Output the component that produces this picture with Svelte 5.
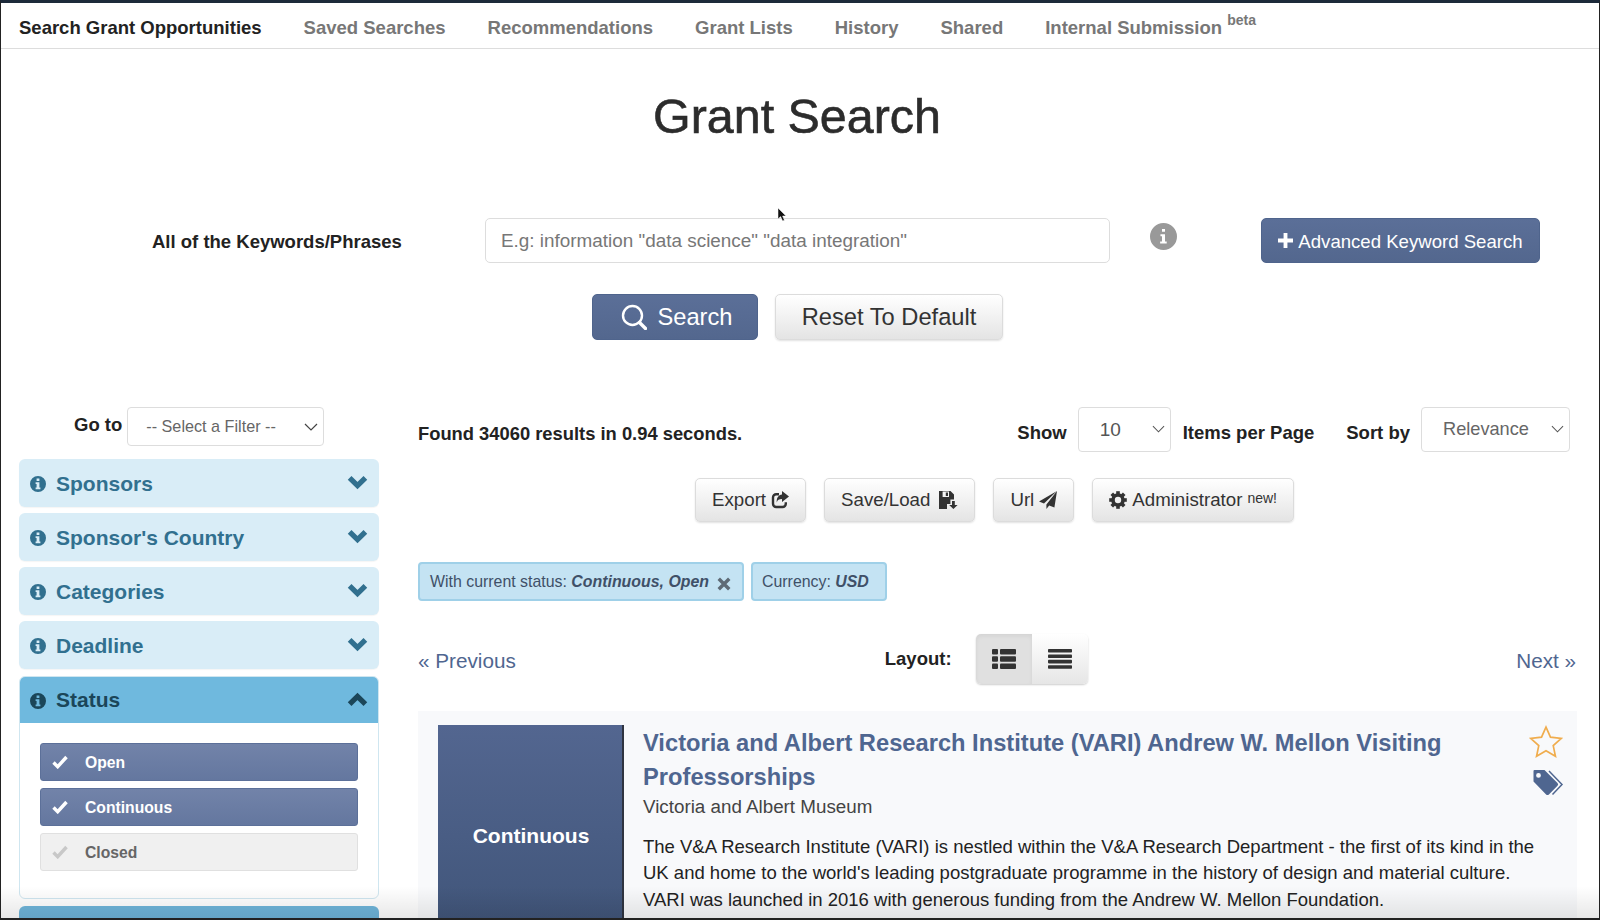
<script>
  const navItems = ['Saved Searches', 'Recommendations', 'Grant Lists', 'History', 'Shared'];
  const collapsed = ["Sponsors", "Sponsor's Country", 'Categories', 'Deadline'];
  const statuses = [
    { label: 'Open', on: true },
    { label: 'Continuous', on: true },
    { label: 'Closed', on: false }
  ];
  const infoPath = 'M8 0a8 8 0 1 0 0 16A8 8 0 0 0 8 0zM6.6 2.6h2.8v2.4H6.6zM5.6 6.2h3.8v5.2h1v1.8H5.6v-1.8h1V8H5.6z';
  const smallInfoPath = 'M8 0a8 8 0 1 0 0 16A8 8 0 0 0 8 0zM7.1 3.6h1.8v1.6H7.1zM6.2 6.6h2.7v4.3h1v1.3H6v-1.3h1.1V7.9h-.9z';
  const teeth = [0, 45, 90, 135, 180, 225, 270, 315];
</script>

<div class="page">
  <nav class="nav">
    <span class="nav-item active">Search Grant Opportunities</span>
    {#each navItems as item}
      <span class="nav-item">{item}</span>
    {/each}
    <span class="nav-item">Internal Submission <sup>beta</sup></span>
  </nav>

  <h1>Grant Search</h1>

  <div class="keyword-row">
    <span class="keyword-label">All of the Keywords/Phrases</span>
    <div class="keyword-input">E.g: information "data science" "data integration"</div>
    <span class="round-info">
      <svg viewBox="0 0 16 16" width="27" height="27"><path fill="#999" fill-rule="evenodd" d={smallInfoPath} /></svg>
    </span>
    <button class="btn primary advanced">
      <svg viewBox="0 0 14 14" width="15" height="15"><path d="M5.2 0h3.6v5.2H14v3.6H8.8V14H5.2V8.8H0V5.2h5.2z" fill="#fff" /></svg>
      <span>Advanced Keyword Search</span>
    </button>
  </div>

  <div class="search-row">
    <button class="btn primary search">
      <svg viewBox="0 0 26 26" width="26" height="26" fill="none" stroke="#fff">
        <circle cx="11.5" cy="11.5" r="9.5" stroke-width="2.4" />
        <path d="M18.5 18.5l6 6" stroke-width="3.4" stroke-linecap="round" />
      </svg>
      Search
    </button>
    <button class="btn default reset">Reset To Default</button>
  </div>

  <div class="main">
    <aside class="sidebar">
      <div class="goto">
        <span class="bold-label">Go to</span>
        <div class="select filter">
          <span>-- Select a Filter --</span>
          <svg viewBox="0 0 14 8" width="14" height="8"><path d="M1 1l6 6 6-6" fill="none" stroke="#444" stroke-width="1.2" /></svg>
        </div>
      </div>

      <div class="panels">
        {#each collapsed as name}
          <div class="panel-head">
            <svg class="info" viewBox="0 0 16 16" width="16" height="16"><path fill="#31708f" fill-rule="evenodd" d={infoPath} /></svg>
            <span>{name}</span>
            <svg class="chev" viewBox="0 0 20 14" width="21" height="15"><path d="M2.5 2.5L10 10l7.5-7.5" fill="none" stroke="#31708f" stroke-width="5" /></svg>
          </div>
        {/each}

        <div class="status-panel">
          <div class="panel-head open">
            <svg class="info" viewBox="0 0 16 16" width="16" height="16"><path fill="#1b4659" fill-rule="evenodd" d={infoPath} /></svg>
            <span>Status</span>
            <svg class="chev" viewBox="0 0 20 14" width="21" height="15"><path d="M2.5 11.5L10 4l7.5 7.5" fill="none" stroke="#1b4659" stroke-width="5" /></svg>
          </div>
          <div class="status-body">
            {#each statuses as s}
              <div class="status-item" class:on={s.on}>
                <svg viewBox="0 0 16 14" width="16" height="14"><path d="M1.5 7.5l4.2 4.2L14.5 2" fill="none" stroke={s.on ? '#fff' : '#c8c8c8'} stroke-width="3.4" /></svg>
                <span>{s.label}</span>
              </div>
            {/each}
          </div>
        </div>
        <div class="panel-head next-panel"></div>
      </div>
    </aside>

    <section class="results">
      <div class="top-row">
        <span class="bold-label found">Found 34060 results in 0.94 seconds.</span>
        <div class="top-controls">
          <span class="bold-label">Show</span>
          <div class="select show">
            <span>10</span>
            <svg viewBox="0 0 14 8" width="13" height="8"><path d="M1 1l6 6 6-6" fill="none" stroke="#555" stroke-width="1.1" /></svg>
          </div>
          <span class="bold-label">Items per Page</span>
          <span class="bold-label sort">Sort by</span>
          <div class="select relevance">
            <span>Relevance</span>
            <svg viewBox="0 0 14 8" width="13" height="8"><path d="M1 1l6 6 6-6" fill="none" stroke="#555" stroke-width="1.1" /></svg>
          </div>
        </div>
      </div>

      <div class="actions">
        <button class="btn default act">
          Export
          <svg viewBox="0 0 18 18" width="18" height="18"><path d="M8 3.2H5.2A3.2 3.2 0 0 0 2 6.4v6.4A3.2 3.2 0 0 0 5.2 16h6.4a3.2 3.2 0 0 0 3.2-3.2v-1.6" fill="none" stroke="#333" stroke-width="2.4" /><path d="M11 0l7 5.6L11 11V8C8 8 6.4 9 5.8 11.4 5.2 7 7.6 3.6 11 3.4z" fill="#333" /></svg>
        </button>
        <button class="btn default act saveload">
          Save/Load
          <svg viewBox="0 0 19 18" width="19" height="18"><path fill-rule="evenodd" fill="#333" d="M0 0h11.5L15 3.4v5.1h-3.6V13H8v5H0zM3.6 0.6v5.4h6.4V0.6zM6.8 1.6h2.2v3.4H6.8z" /><path d="M13 10h2.8v4H18.6l-4.2 4-4.2-4H13z" fill="#333" /></svg>
        </button>
        <button class="btn default act url">
          Url
          <svg viewBox="0 0 18 18" width="18" height="18"><path d="M18 0L0 10.6l5 2z" fill="#333" /><path d="M18 0L7.4 13.6V18l2.8-3.4 5.2 2z" fill="#333" /></svg>
        </button>
        <button class="btn default act admin">
          <svg viewBox="0 0 18 18" width="18" height="18">
            <circle cx="9" cy="9" r="5" fill="none" stroke="#333" stroke-width="3.6" />
            {#each teeth as a}
              <rect x="7.2" y="0.2" width="3.6" height="4" fill="#333" transform="rotate({a} 9 9)" />
            {/each}
          </svg>
          <span>Administrator</span> <sup>new!</sup>
        </button>
      </div>

      <div class="chips">
        <div class="chip">
          With current status:&nbsp;<b>Continuous, Open</b>
          <svg viewBox="0 0 12 12" width="14" height="14"><path d="M1.5 1.5l9 9M10.5 1.5l-9 9" stroke="#5f6b76" stroke-width="3" /></svg>
        </div>
        <div class="chip usd">Currency:&nbsp;<b>USD</b></div>
      </div>

      <div class="pager">
        <span class="page-link">« Previous</span>
        <div class="layout-group">
          <span class="bold-label">Layout:</span>
          <div class="toggle">
            <span class="toggle-btn pressed">
              <svg viewBox="0 0 24 20" width="24" height="20" fill="#333">
                <rect x="0" y="0" width="6" height="5.4" rx="1" /><rect x="8" y="0" width="16" height="5.4" rx="1" />
                <rect x="0" y="7.3" width="6" height="5.4" rx="1" /><rect x="8" y="7.3" width="16" height="5.4" rx="1" />
                <rect x="0" y="14.6" width="6" height="5.4" rx="1" /><rect x="8" y="14.6" width="16" height="5.4" rx="1" />
              </svg>
            </span>
            <span class="toggle-btn">
              <svg viewBox="0 0 24 20" width="24" height="20" fill="#333">
                <rect y="0" width="24" height="3.6" rx=".8" /><rect y="5.4" width="24" height="3.6" rx=".8" />
                <rect y="10.8" width="24" height="3.6" rx=".8" /><rect y="16.2" width="24" height="3.6" rx=".8" />
              </svg>
            </span>
          </div>
        </div>
        <span class="page-link next">Next »</span>
      </div>

      <article class="card">
        <div class="status-box">Continuous</div>
        <div class="card-body">
          <h2>Victoria and Albert Research Institute (VARI) Andrew W. Mellon Visiting Professorships</h2>
          <div class="sponsor">Victoria and Albert Museum</div>
          <p>The V&amp;A Research Institute (VARI) is nestled within the V&amp;A Research Department - the first of its kind in the UK and home to the world's leading postgraduate programme in the history of design and material culture. VARI was launched in 2016 with generous funding from the Andrew W. Mellon Foundation.</p>
        </div>
        <div class="card-icons">
          <svg viewBox="0 0 32 31" width="34" height="33"><path d="M16 2l4.2 9.4 10.2 1.1-7.6 6.9 2.1 10-8.9-5.1-8.9 5.1 2.1-10-7.6-6.9 10.2-1.1z" fill="none" stroke="#f0ad4e" stroke-width="1.6" /></svg>
          <svg class="tag" viewBox="0 0 30 26" width="31" height="26"><path fill="#4f6690" fill-rule="evenodd" d="M1 0h10l13 13a2 2 0 0 1 0 2.8L15.4 24.4a2 2 0 0 1-2.8 0L0 11.5V1a1 1 0 0 1 1-1zM5 3a2.4 2.4 0 1 0 0 4.8A2.4 2.4 0 0 0 5 3z" /><path d="M15.5 1l13 13.6-9.5 10" fill="none" stroke="#4f6690" stroke-width="1.5" /></svg>
        </div>
      </article>
    </section>
  </div>

  <svg class="cursor" viewBox="0 0 9 15" width="9" height="15"><path d="M0 0v11l2.6-2.4L4.6 13l1.8-.8L4.6 8H8z" fill="#111" stroke="#fff" stroke-width=".5" /></svg>
  <div class="bottom-fade"></div>
</div>

<style>
  :global(body) {
    margin: 0;
    background: #fff;
  }
  .page {
    position: relative;
    box-sizing: border-box;
    width: 1600px;
    height: 920px;
    overflow: hidden;
    border-top: 3px solid #1c2a3a;
    border-left: 1px solid #222;
    border-right: 1px solid #222;
    border-bottom: 2px solid #222;
    font-family: "Liberation Sans", Arial, sans-serif;
    color: #222;
    font-size: 18px;
  }
  .nav {
    display: flex;
    align-items: center;
    gap: 42px;
    height: 45px;
    padding-left: 18px;
    border-bottom: 1px solid #ddd;
  }
  .nav-item {
    font-weight: 700;
    font-size: 18.5px;
    color: #777;
    white-space: nowrap;
    margin-top: 4px;
  }
  .nav-item.active {
    color: #222;
  }
  .nav-item sup {
    font-size: 14px;
    line-height: 0;
    position: relative;
    top: -1px;
  }
  h1 {
    margin: 40px 0 0;
    font-size: 48.4px;
    line-height: 54px;
    font-weight: 400;
    -webkit-text-stroke: 0.6px #2c2c2c;
    text-align: center;
    color: #2c2c2c;
    padding-right: 6px;
  }
  .keyword-row {
    display: flex;
    align-items: center;
    height: 45px;
    margin-top: 75px;
    padding-left: 151px;
  }
  .keyword-label {
    width: 333px;
    font-weight: 700;
    font-size: 18.5px;
    margin-top: 2px;
  }
  .keyword-input {
    box-sizing: border-box;
    width: 625px;
    height: 45px;
    display: flex;
    align-items: center;
    padding: 1px 0 0 15px;
    border: 1px solid #ddd;
    border-radius: 5px;
    color: #777;
    font-size: 18.9px;
  }
  .round-info {
    display: flex;
    margin-left: 40px;
    margin-bottom: 9px;
  }
  .btn {
    box-sizing: border-box;
    font-family: inherit;
    display: inline-flex;
    align-items: center;
    justify-content: center;
    border-radius: 5px;
    cursor: pointer;
    white-space: nowrap;
  }
  .primary {
    color: #fff;
    border: 1px solid #4f648c;
    background: linear-gradient(#5b6f98, #53678e);
  }
  .default {
    color: #333;
    border: 1px solid #dcdcdc;
    background: linear-gradient(#fff, #e4e4e4);
    box-shadow: 0 1px 2px rgba(0, 0, 0, 0.12);
  }
  .advanced {
    width: 279px;
    height: 45px;
    gap: 5px;
    font-size: 18.6px;
    margin-left: 84px;
  }
  .advanced span {
    margin-top: 2px;
  }
  .search-row {
    display: flex;
    justify-content: center;
    gap: 17px;
    margin-top: 31px;
    padding-right: 5px;
  }
  .search {
    width: 166px;
    height: 46px;
    gap: 10px;
    padding-left: 10px;
    font-size: 23.7px;
  }
  .reset {
    width: 228px;
    height: 46px;
    font-size: 23.7px;
  }
  .main {
    display: flex;
    align-items: flex-start;
    margin-top: 66px;
    padding-left: 18px;
  }
  .sidebar {
    width: 360px;
    flex: none;
  }
  .goto {
    display: flex;
    align-items: center;
    gap: 5px;
    margin-top: 1px;
    padding-left: 55px;
  }
  .goto .bold-label {
    margin-top: -3px;
  }
  .bold-label {
    font-weight: 700;
    font-size: 18.5px;
    color: #222;
    white-space: nowrap;
  }
  .select {
    box-sizing: border-box;
    display: flex;
    align-items: center;
    justify-content: space-between;
    background: #fff;
    border: 1px solid #ddd;
    border-radius: 4px;
    color: #666;
  }
  .filter {
    width: 197px;
    height: 39px;
    padding: 0 5px 0 18px;
    font-size: 16.2px;
  }
  .panels {
    display: flex;
    flex-direction: column;
    gap: 6px;
    margin-top: 13px;
  }
  .panel-head {
    box-sizing: border-box;
    display: flex;
    align-items: center;
    height: 48px;
    padding: 0 11px 0 11px;
    border-radius: 6px;
    background: #d9edf7;
    color: #31708f;
    font-size: 21px;
    font-weight: 700;
    box-shadow: 0 1px 1px rgba(0, 0, 0, 0.04);
  }
  .panel-head span {
    margin-top: 1px;
  }
  .panel-head .info {
    margin-right: 10px;
    flex: none;
    margin-top: 2px;
  }
  .panel-head .chev {
    margin-left: auto;
    margin-bottom: 1px;
  }
  .status-panel {
    box-sizing: border-box;
    height: 223px;
    border: 1px solid #cfe6f0;
    border-radius: 6px;
    overflow: hidden;
    margin-top: 1px;
  }
  .panel-head.open {
    margin: -1px -1px 0;
    height: 47px;
    border-radius: 0;
    background: #6fb9de;
    color: #1b4659;
    box-shadow: none;
  }
  .status-body {
    display: flex;
    flex-direction: column;
    gap: 7px;
    padding: 20px 20px 0;
  }
  .status-item {
    box-sizing: border-box;
    display: flex;
    align-items: center;
    height: 38px;
    padding-left: 11px;
    border: 1px solid #e0e0e0;
    border-radius: 3px;
    background: #f0f0f0;
    color: #666;
    font-size: 15.7px;
    font-weight: 700;
  }
  .status-item span {
    margin: 2px 0 0 17px;
  }
  .status-item.on {
    border-color: #5c7099;
    background: linear-gradient(#7283a9, #64779f);
    color: #fff;
  }
  .next-panel {
    background: #6fb5da;
    margin-top: 1px;
    flex: none;
  }
  .results {
    width: 1159px;
    margin-left: 39px;
    flex: none;
  }
  .top-row {
    display: flex;
    align-items: center;
    justify-content: space-between;
    height: 45px;
    margin-top: 1px;
    padding-right: 7px;
  }
  .bold-label.found {
    margin-top: 8px;
    font-size: 18.35px;
  }
  .top-controls {
    display: flex;
    align-items: center;
  }
  .top-controls .bold-label {
    margin-top: 6px;
  }
  .show {
    width: 93px;
    height: 45px;
    padding: 0 5px 0 21px;
    margin: 0 12px 0 11px;
    font-size: 19px;
    color: #555;
  }
  .show svg, .relevance svg {
    margin-bottom: 2px;
  }
  .sort {
    margin-left: 32px;
    margin-right: 11px;
  }
  .relevance {
    width: 149px;
    height: 45px;
    padding: 0 5px 0 21px;
    font-size: 18.2px;
  }
  .actions {
    display: flex;
    justify-content: center;
    gap: 18px;
    margin-top: 26px;
    padding-right: 6px;
  }
  .act {
    height: 44px;
    padding: 0 16px;
    gap: 5px;
    font-size: 18.7px;
  }
  .saveload {
    gap: 9px;
  }
  .url {
    gap: 5px;
  }
  .act sup {
    font-size: 14px;
    line-height: 0;
    position: relative;
    top: -2px;
  }
  .chips {
    display: flex;
    gap: 7px;
    margin-top: 40px;
  }
  .chip {
    box-sizing: border-box;
    display: flex;
    align-items: center;
    height: 39px;
    padding: 0 11px 0 10px;
    border: 2px solid #9fd0e8;
    border-radius: 4px;
    background: #c4e3f3;
    color: #3f5068;
    font-size: 15.9px;
    white-space: nowrap;
  }
  .chip.usd {
    padding: 0 16px 0 9px;
  }
  .chip b {
    font-style: italic;
  }
  .chip svg {
    margin-left: 8px;
    margin-top: 4px;
  }
  .pager {
    display: flex;
    align-items: center;
    height: 50px;
    margin-top: 33px;
  }
  .page-link {
    font-size: 20.7px;
    color: #4f6690;
    margin-top: 4px;
    white-space: nowrap;
  }
  .page-link.next {
    margin-left: auto;
    padding-right: 1px;
  }
  .layout-group {
    display: flex;
    align-items: center;
    gap: 24px;
    margin-left: 369px;
  }
  .layout-group .bold-label {
    margin-top: -1px;
  }
  .toggle {
    display: flex;
    height: 50px;
    border-radius: 5px;
    box-shadow: 0 1px 2px rgba(0, 0, 0, 0.2);
  }
  .toggle-btn {
    display: flex;
    align-items: center;
    justify-content: center;
    width: 56px;
    background: linear-gradient(#fff, #e6e6e6);
    border-radius: 0 5px 5px 0;
  }
  .toggle-btn.pressed {
    background: #e0e0e0;
    border-radius: 5px 0 0 5px;
    box-shadow: inset 0 2px 4px rgba(0, 0, 0, 0.06);
  }
  .card {
    display: flex;
    align-items: flex-start;
    margin-top: 27px;
    padding: 14px 13px 0 20px;
    background: #f8f9fb;
    height: 240px;
    box-sizing: border-box;
  }
  .status-box {
    flex: none;
    box-sizing: border-box;
    display: flex;
    align-items: center;
    justify-content: center;
    width: 184px;
    height: 222px;
    padding: 0 0 0 2px;
    background: linear-gradient(#536690, #3f5478);
    color: #fff;
    font-weight: 700;
    font-size: 21px;
    box-shadow: 2px 0 0 #2f3440;
  }
  .card-body {
    width: 895px;
    margin-left: 21px;
    flex: none;
  }
  h2 {
    margin: 1px 0 0;
    font-size: 23.7px;
    line-height: 34px;
    font-weight: 700;
    color: #4f6690;
  }
  .sponsor {
    font-size: 18.8px;
    line-height: 26px;
    color: #444;
    margin-top: 0;
  }
  p {
    margin: 14px 0 0;
    font-size: 18.5px;
    line-height: 26.4px;
    color: #222;
  }
  .card-icons {
    display: flex;
    flex: none;
    flex-direction: column;
    align-items: flex-end;
    gap: 12px;
    margin-left: -9px;
  }
  .tag {
    margin-right: -1px;
  }
  .cursor {
    position: absolute;
    left: 777px;
    top: 205px;
  }
  .bottom-fade {
    position: absolute;
    left: 0;
    right: 0;
    bottom: 0;
    height: 32px;
    pointer-events: none;
    background: linear-gradient(rgba(0, 0, 0, 0), rgba(0, 0, 0, 0.09));
  }
</style>
